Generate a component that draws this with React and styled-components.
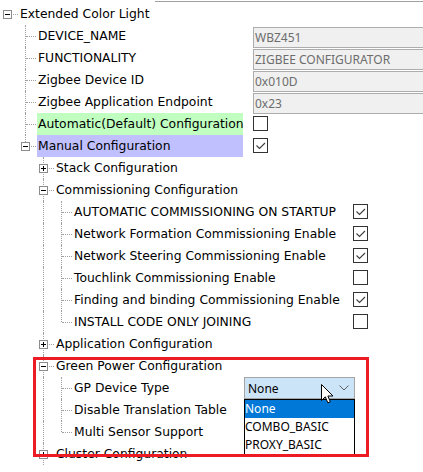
import React from 'react';
import styled, { createGlobalStyle, css } from 'styled-components';

const Global = createGlobalStyle`
  html, body { margin: 0; padding: 0; background: #fff; overflow: hidden; }
  #root { width: 423px; height: 472px; }
`;

const Page = styled.div`
  position: relative;
  width: 423px;
  height: 472px;
  overflow: hidden;
  background: #fff;
  font-family: "DejaVu Sans", Verdana, sans-serif;
  font-size: 12.35px;
  color: #000;
`;

const TopRule = styled.div`
  height: 1px;
  margin: 1px 0 1px 155px;
  background: #a0a0a0;
`;

const Tree = styled.div`
  display: flex;
  flex-direction: column;
`;

const RowLine = styled.div`
  display: flex;
  align-items: stretch;
  height: 22px;
  white-space: nowrap;
`;

const dotV = css`
  content: '';
  position: absolute;
  left: 7px;
  border-left: 1px dotted #a0a0a0;
`;

const Guide = styled.span`
  position: relative;
  flex: 0 0 18px;
  height: 22px;
  ${(p) => (p.$kind === 'line' || p.$kind === 'tee') && css`
    &::before { ${dotV} top: 0; bottom: 0; }
  `}
  ${(p) => p.$kind === 'elbow' && css`
    &::before { ${dotV} top: 0; height: 11px; }
  `}
  ${(p) => (p.$kind === 'tee' || p.$kind === 'elbow' || p.$kind === 'root') && css`
    &::after {
      content: '';
      position: absolute;
      left: 8px;
      right: 0;
      top: 11px;
      border-top: 1px dotted #a0a0a0;
    }
  `}
`;

const Expander = styled.span`
  position: absolute;
  z-index: 1;
  left: 3px;
  top: 7px;
  width: 9px;
  height: 9px;
  box-sizing: border-box;
  border: 1px solid #8c8c8c;
  background: #fff;
  &::before {
    content: '';
    position: absolute;
    left: 1px;
    top: 3px;
    width: 5px;
    height: 1px;
    background: #000;
  }
  ${(p) => !p.$open && css`
    &::after {
      content: '';
      position: absolute;
      left: 3px;
      top: 1px;
      width: 1px;
      height: 5px;
      background: #000;
    }
  `}
`;

const Label = styled.span`
  display: flex;
  align-items: center;
  flex: none;
  box-sizing: border-box;
  margin-left: 1px;
  padding-left: 1px;
  width: ${(p) => (p.$width ? `${p.$width}px` : 'auto')};
  margin-right: ${(p) => (p.$width ? '10px' : '0')};
  background: ${(p) => p.$bg || 'transparent'};
`;

const Field = styled.span`
  flex: none;
  display: flex;
  align-items: center;
  box-sizing: border-box;
  width: 200px;
  height: 21px;
  margin-top: 2px;
  padding-left: 1px;
  border: 1px solid #adadad;
  background: #f0f0f0;
  color: #6d6d6d;
  font-family: "Noto Sans", "Open Sans", sans-serif;
  font-size: 12px;
`;

const CheckBox = styled.span`
  flex: none;
  align-self: center;
  box-sizing: border-box;
  width: 15px;
  height: 15px;
  margin-top: -1px;
  border: 1px solid #333;
  background: #fff;
  display: flex;
  align-items: center;
  justify-content: center;
`;

const SelectWrap = styled.span`
  position: relative;
  z-index: 2;
  flex: none;
  width: 111px;
  height: 22px;
  font-family: "Noto Sans", "Open Sans", sans-serif;
  font-size: 12px;
`;

const SelectBox = styled.span`
  display: flex;
  align-items: center;
  justify-content: space-between;
  box-sizing: border-box;
  height: 22px;
  padding: 0 5px 0 3px;
  border: 1px solid #a5a5a5;
  background: #cce4f7;
  color: #000;
`;

const DropList = styled.div`
  position: absolute;
  top: 22px;
  left: 0;
  width: 111px;
  box-sizing: border-box;
  border: 1px solid #000;
  background: #fff;
`;

const Option = styled.div`
  height: 18px;
  line-height: 18px;
  padding-left: 0;
  background: ${(p) => (p.$active ? '#0078d7' : '#fff')};
  color: ${(p) => (p.$active ? '#fff' : '#000')};
`;

const Annotation = styled.div`
  position: absolute;
  z-index: 3;
  left: 33px;
  top: 357px;
  width: 336px;
  height: 100px;
  box-sizing: border-box;
  border: 3px solid #ed1c24;
  pointer-events: none;
`;

const Cursor = styled.svg`
  position: absolute;
  z-index: 4;
  left: 321px;
  top: 384px;
`;

const Check = () => (
  <svg width="13" height="13" viewBox="0 0 13 13">
    <polyline points="2.5,6.5 5.5,9.5 11,4" fill="none" stroke="#3c3c3c" strokeWidth="1.1" />
  </svg>
);

const Chevron = () => (
  <svg width="10" height="6" viewBox="0 0 10 6">
    <polyline points="0.5,0.5 5,5 9.5,0.5" fill="none" stroke="#606060" strokeWidth="1" />
  </svg>
);

const W1 = 206;
const W3 = 270;
const WG = 161;

const rows = [
  { label: 'Extended Color Light', guides: [], conn: 'root', exp: 'open' },
  { label: 'DEVICE_NAME', guides: ['blank'], conn: 'tee', w: W1, value: { type: 'field', text: 'WBZ451' } },
  { label: 'FUNCTIONALITY', guides: ['blank'], conn: 'tee', w: W1, value: { type: 'field', text: 'ZIGBEE CONFIGURATOR' } },
  { label: 'Zigbee Device ID', guides: ['blank'], conn: 'tee', w: W1, value: { type: 'field', text: '0x010D' } },
  { label: 'Zigbee Application Endpoint', guides: ['blank'], conn: 'tee', w: W1, value: { type: 'field', text: '0x23' } },
  { label: 'Automatic(Default) Configuration', guides: ['blank'], conn: 'tee', w: W1, bg: '#c0ffc0', value: { type: 'check', on: false } },
  { label: 'Manual Configuration', guides: ['blank'], conn: 'elbow', exp: 'open', w: W1, bg: '#c0c0ff', value: { type: 'check', on: true } },
  { label: 'Stack Configuration', guides: ['blank', 'blank'], conn: 'tee', exp: 'closed' },
  { label: 'Commissioning Configuration', guides: ['blank', 'blank'], conn: 'tee', exp: 'open' },
  { label: 'AUTOMATIC COMMISSIONING ON STARTUP', guides: ['blank', 'blank', 'line'], conn: 'tee', w: W3, value: { type: 'check', on: true } },
  { label: 'Network Formation Commissioning Enable', guides: ['blank', 'blank', 'line'], conn: 'tee', w: W3, value: { type: 'check', on: true } },
  { label: 'Network Steering Commissioning Enable', guides: ['blank', 'blank', 'line'], conn: 'tee', w: W3, value: { type: 'check', on: true } },
  { label: 'Touchlink Commissioning Enable', guides: ['blank', 'blank', 'line'], conn: 'tee', w: W3, value: { type: 'check', on: false } },
  { label: 'Finding and binding Commissioning Enable', guides: ['blank', 'blank', 'line'], conn: 'tee', w: W3, value: { type: 'check', on: true } },
  { label: 'INSTALL CODE ONLY JOINING', guides: ['blank', 'blank', 'line'], conn: 'elbow', w: W3, value: { type: 'check', on: false } },
  { label: 'Application Configuration', guides: ['blank', 'blank'], conn: 'tee', exp: 'closed' },
  { label: 'Green Power Configuration', guides: ['blank', 'blank'], conn: 'tee', exp: 'open' },
  { label: 'GP Device Type', guides: ['blank', 'blank', 'line'], conn: 'tee', w: WG, value: { type: 'select' } },
  { label: 'Disable Translation Table', guides: ['blank', 'blank', 'line'], conn: 'tee', w: WG, value: { type: 'check', on: false } },
  { label: 'Multi Sensor Support', guides: ['blank', 'blank', 'line'], conn: 'elbow', w: WG, value: { type: 'check', on: false } },
  { label: 'Cluster Configuration', guides: ['blank', 'blank'], conn: 'tee', exp: 'closed' },
];

const Value = ({ value }) => {
  if (!value) return null;
  if (value.type === 'field') return <Field>{value.text}</Field>;
  if (value.type === 'check') return <CheckBox>{value.on && <Check />}</CheckBox>;
  return (
    <SelectWrap>
      <SelectBox>
        <span>None</span>
        <Chevron />
      </SelectBox>
      <DropList>
        <Option $active>None</Option>
        <Option>COMBO_BASIC</Option>
        <Option>PROXY_BASIC</Option>
      </DropList>
    </SelectWrap>
  );
};

const Row = ({ row }) => (
  <RowLine>
    {row.guides.map((g, i) => (
      <Guide key={i} $kind={g} />
    ))}
    <Guide $kind={row.conn}>
      {row.exp && <Expander $open={row.exp === 'open'} />}
    </Guide>
    <Label $width={row.w} $bg={row.bg}>{row.label}</Label>
    <Value value={row.value} />
  </RowLine>
);

export default function App() {
  return (
    <Page>
      <Global />
      <TopRule />
      <Tree>
        {rows.map((r, i) => (
          <Row key={i} row={r} />
        ))}
      </Tree>
      <Annotation />
      <Cursor width="13" height="20" viewBox="0 0 13 20">
        <path d="M0.5,0.5 L0.5,16.5 L4.3,12.8 L6.8,18.8 L9.3,17.8 L6.9,12 L12,12 Z" fill="#fff" stroke="#000" strokeWidth="1" strokeLinejoin="miter" />
      </Cursor>
    </Page>
  );
}
